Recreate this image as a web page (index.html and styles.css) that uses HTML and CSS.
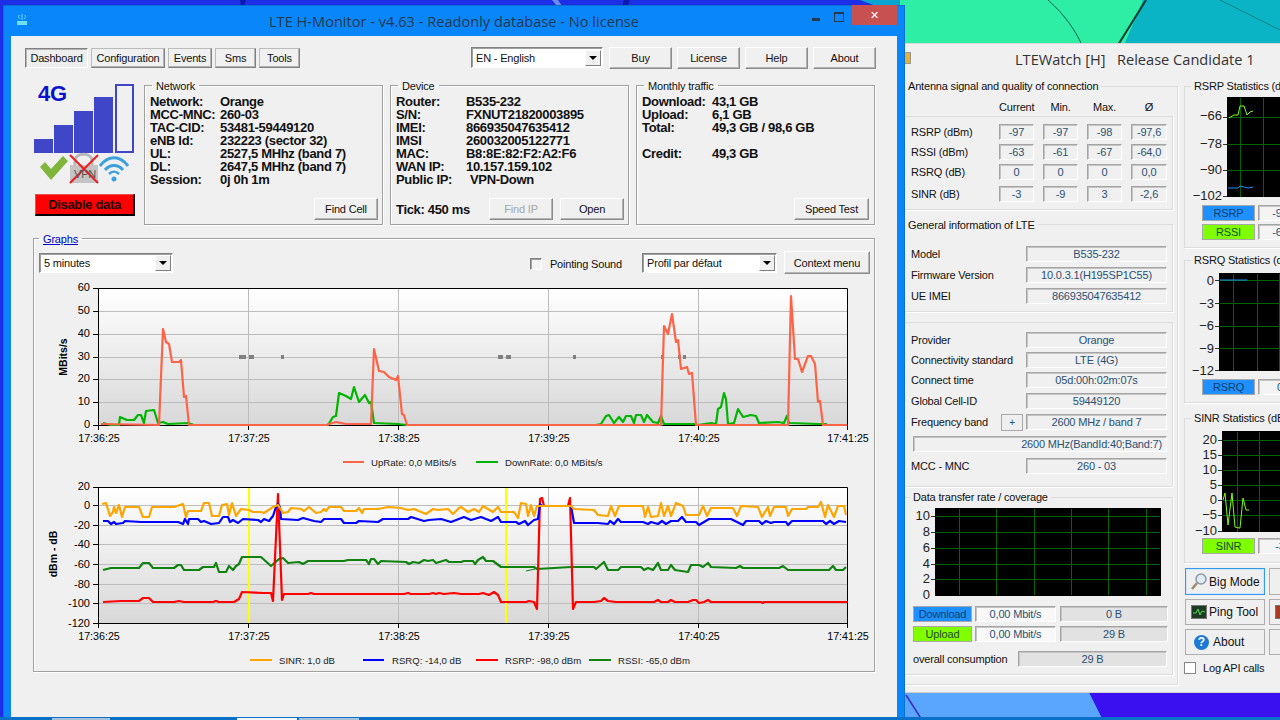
FILE: index.html
```html
<!DOCTYPE html>
<html lang="en">
  <head>
    <meta charset="UTF-8" />
    <title>LTE H-Monitor</title>
    <link rel="stylesheet" href="styles.css">
  </head>
  <body>
    <svg class="wallpaper" width="1280" height="720" viewBox="0 0 1280 720">
      <rect width="1280" height="720" fill="#1c2fe6" />
      <polygon points="240,0 246,0 244,6 241,6" fill="#0c1ab0" />
      <polygon points="552,0 558,0 562,6 557,6" fill="#6c8cf4" />
      <polygon points="624,0 630,0 628,6 622,6" fill="#0c1ab0" />
      <polygon points="860,0 905,0 905,6 876,6" fill="#0aa4d0" />
      <polygon points="900,0 1143,0 1130,50 900,50" fill="#2eeea6" />
      <polygon points="1143,0 1280,0 1280,50 1122,50" fill="#0ab4c4" />
      <path d="M1048,0 C1065,15 1075,30 1082,45" stroke="#0c5c50" stroke-width="1" fill="none" />
      <path d="M1146,0 L1118,45" stroke="#0a3a34" stroke-width="2" fill="none" />
      <path d="M1220,0 L1280,30" stroke="#0a8090" stroke-width="1" fill="none" />
      <polygon points="900,690 1088,690 1103,720 900,720" fill="#5aa6ff" />
      <polygon points="1088,690 1280,690 1280,720 1103,720" fill="#3a10f0" />
      <path d="M906,695 L922,720" stroke="#3a2ac0" stroke-width="1.5" fill="none" />
      <rect x="0" y="717" width="1280" height="3" fill="#0a70c8" />
      <rect x="52" y="718" width="58" height="2" fill="#a8c4dc" />
      <rect x="237" y="718" width="60" height="2" fill="#f4f8fc" />
      <rect x="299" y="718" width="60" height="2" fill="#a8c4dc" />
    </svg>

    <section class="watch">
      <header class="watch-title">LTEWatch [H] &nbsp; Release Candidate 1</header>
      <span class="watch-icon"></span>
      <div class="watch-body">
        <fieldset class="soft watch-left">
          <legend>Antenna signal and quality of connection</legend>
          <div class="sig-head">
            <span>Current</span><span>Min.</span><span>Max.</span><span>Ø</span>
          </div>
          <div class="soft-box sig-table">
            <span class="sig-label">RSRP (dBm)</span><span class="field">-97</span><span class="field">-97</span><span class="field">-98</span><span class="field">-97,6</span>
            <span class="sig-label">RSSI (dBm)</span><span class="field">-63</span><span class="field">-61</span><span class="field">-67</span><span class="field">-64,0</span>
            <span class="sig-label">RSRQ (dB)</span><span class="field">0</span><span class="field">0</span><span class="field">0</span><span class="field">0,0</span>
            <span class="sig-label">SINR (dB)</span><span class="field">-3</span><span class="field">-9</span><span class="field">3</span><span class="field">-2,6</span>
          </div>

          <fieldset class="soft info-group">
            <legend>General information of LTE</legend>
            <div class="info-rows info-rows-wide">
              <div class="info-row"><span class="info-label">Model</span><span class="field">B535-232</span></div>
              <div class="info-row"><span class="info-label">Firmware Version</span><span class="field">10.0.3.1(H195SP1C55)</span></div>
              <div class="info-row"><span class="info-label">UE IMEI</span><span class="field">866935047635412</span></div>
            </div>
          </fieldset>

          <div class="soft-box provider-box">
            <div class="info-rows">
              <div class="info-row"><span class="info-label">Provider</span><span class="field">Orange</span></div>
              <div class="info-row"><span class="info-label">Connectivity standard</span><span class="field">LTE (4G)</span></div>
              <div class="info-row"><span class="info-label">Connect time</span><span class="field">05d:00h:02m:07s</span></div>
              <div class="info-row loose"><span class="info-label">Global Cell-ID</span><span class="field">59449120</span></div>
              <div class="info-row loose">
                <span class="info-label info-label-short">Frequency band</span>
                <button class="plus-btn">+</button>
                <span class="field">2600 MHz / band 7</span>
              </div>
              <div class="info-row looser"><span class="field field-wide">2600 MHz(BandId:40;Band:7)</span></div>
              <div class="info-row looser"><span class="info-label">MCC - MNC</span><span class="field">260 - 03</span></div>
            </div>
          </div>

          <fieldset class="soft transfer-group">
            <legend>Data transfer rate / coverage</legend>
            <svg class="mini-chart transfer-chart" width="268" height="96" viewBox="905 504 268 96">
              <rect x="935" y="508" width="226" height="88" fill="#000" />
              <path class="mini-grid" d="M959.5,509V595M996.5,509V595M1034.5,509V595M1071.5,509V595M1108.5,509V595M1146.5,509V595M936,516.5H1160M936,532.5H1160M936,548.5H1160M936,564.5H1160M936,579.5H1160" />
              <path class="mini-tick" d="M931,516.5h4M931,532.5h4M931,548.5h4M931,564.5h4M931,579.5h4" />
              <text x="930" y="520">10</text>
              <text x="930" y="536">8</text>
              <text x="930" y="552">6</text>
              <text x="930" y="568">4</text>
              <text x="930" y="583">2</text>
              <text x="930" y="599">0</text>
            </svg>
            <div class="rate-rows">
              <span class="swatch swatch-blue">Download</span><span class="field field-light">0,00 Mbit/s</span><span class="field field-grey">0 B</span>
              <span class="swatch swatch-green">Upload</span><span class="field field-light">0,00 Mbit/s</span><span class="field field-grey">29 B</span>
            </div>
            <div class="overall">
              <span>overall consumption</span>
              <span class="field field-grey">29 B</span>
            </div>
          </fieldset>
        </fieldset>

        <div class="watch-right">
          <fieldset class="soft stat-group">
            <legend>RSRP Statistics (dBm)</legend>
            <svg class="mini-chart stat-rsrp" width="130" height="104" viewBox="1184 94 130 104">
              <rect x="1226" y="97" width="90" height="100" fill="#000" />
              <path class="mini-grid" d="M1239.5,98V197M1262.5,98V197M1227,117.5H1316M1227,144.5H1316M1227,170.5H1316" />
              <path class="mini-tick" d="M1222,117.5h4M1222,144.5h4M1222,170.5h4M1222,196.5h4" />
              <text x="1221" y="120">−66</text>
              <text x="1221" y="148">−78</text>
              <text x="1221" y="174">−90</text>
              <text x="1221" y="200">−102</text>
              <polyline class="trace-green" points="1228,118 1233,115 1237,115 1239,106 1243,106 1246,115 1249,112 1252,111" />
              <polyline class="trace-blue" points="1227,188 1237,188 1239,186 1243,187 1247,188 1252,187" />
            </svg>
            <div class="stat-row"><span class="swatch swatch-blue swatch-stat">RSRP</span><span class="field">-97</span></div>
            <div class="stat-row"><span class="swatch swatch-green swatch-stat">RSSI</span><span class="field">-63</span></div>
          </fieldset>

          <fieldset class="soft stat-group stat-rsrq-group">
            <legend>RSRQ Statistics (dB)</legend>
            <svg class="mini-chart stat-rsrq" width="130" height="101" viewBox="1184 272 130 101">
              <rect x="1218" y="273" width="90" height="98" fill="#000" />
              <path class="mini-grid" d="M1232.5,274V371M1256.5,274V371M1278.5,274V371M1219,280.5H1308M1219,303.5H1308M1219,326.5H1308M1219,348.5H1308" />
              <path class="mini-tick" d="M1214,280.5h4M1214,303.5h4M1214,326.5h4M1214,348.5h4M1214,370.5h4" />
              <text x="1213" y="285">0</text>
              <text x="1213" y="308">−3</text>
              <text x="1213" y="330">−6</text>
              <text x="1213" y="353">−9</text>
              <text x="1213" y="375">−12</text>
              <polyline class="trace-blue" points="1219,280 1246,280" />
            </svg>
            <div class="stat-row"><span class="swatch swatch-blue swatch-stat">RSRQ</span><span class="field">0</span></div>
          </fieldset>

          <fieldset class="soft stat-group stat-sinr-group">
            <legend>SINR Statistics (dB)</legend>
            <svg class="mini-chart stat-sinr" width="130" height="106" viewBox="1184 430 130 106">
              <rect x="1221" y="431" width="90" height="101" fill="#000" />
              <path class="mini-grid" d="M1236.5,432V532M1258.5,432V532M1222,440.5H1311M1222,455.5H1311M1222,470.5H1311M1222,485.5H1311M1222,500.5H1311M1222,515.5H1311" />
              <path class="mini-tick" d="M1217,440.5h4M1217,455.5h4M1217,470.5h4M1217,485.5h4M1217,500.5h4M1217,515.5h4M1217,531.5h4" />
              <text x="1216" y="444">20</text>
              <text x="1216" y="459">15</text>
              <text x="1216" y="474">10</text>
              <text x="1216" y="489">5</text>
              <text x="1216" y="504">0</text>
              <text x="1216" y="519">−5</text>
              <text x="1216" y="535">−10</text>
              <polyline class="trace-green" points="1222,500 1224,493 1227,525 1231,493 1234,527 1238,528 1239,528 1242,498 1245,510 1248,510" />
            </svg>
            <div class="stat-row"><span class="swatch swatch-green swatch-stat">SINR</span><span class="field">-3</span></div>
          </fieldset>

          <div class="side-buttons">
            <button class="side-btn side-btn-focus">
              <svg width="16" height="18" viewBox="0 0 16 18"><circle cx="10" cy="6" r="5" fill="#dfeaf2" stroke="#8a9aa6" stroke-width="1.5" /><path d="M6,10 L1,16" stroke="#9a8a70" stroke-width="2.5" /></svg>
              Big Mode
            </button>
            <button class="side-btn"></button>
            <button class="side-btn">
              <svg width="16" height="14" viewBox="0 0 16 14"><rect x="0.5" y="0.5" width="15" height="13" fill="#1c3a24" stroke="#777" /><path d="M2,8 L5,8 L7,4 L9,10 L11,6 L14,7" stroke="#4ce04c" fill="none" /></svg>
              Ping Tool
            </button>
            <button class="side-btn">
              <svg width="14" height="14" viewBox="0 0 14 14"><rect x="0.5" y="0.5" width="13" height="13" fill="#a83a24" stroke="#777" /></svg>
            </button>
            <button class="side-btn side-btn-about">
              <svg width="15" height="15" viewBox="0 0 15 15"><circle cx="7.5" cy="7.5" r="7.5" fill="#1c7ad4" /></svg>
              <span class="about-q">?</span>
              About
            </button>
            <button class="side-btn"></button>
          </div>
          <label class="log-api"><span class="check check-soft"></span>Log API calls</label>
        </div>
      </div>
    </section>

    <section class="monitor">
      <header class="monitor-title">
        <svg class="app-icon" width="10" height="12" viewBox="0 0 10 12"><path d="M5,1V7M2,2C1,4 2,5 3,6M8,2C9,4 8,5 7,6" stroke="#6fe0f0" fill="none" /><rect x="0" y="8" width="10" height="4" fill="#6fe0f0" /></svg>
        <span class="monitor-name">LTE H-Monitor - v4.63 - Readonly database - No license</span>
        <div class="caption">
          <span class="cap-min"></span>
          <span class="cap-max"></span>
          <span class="cap-close">✕</span>
        </div>
      </header>

      <div class="client">
        <nav class="toolbar">
          <div class="tabs">
            <button class="tab tab-active">Dashboard</button>
            <button class="tab tab-config">Configuration</button>
            <button class="tab tab-events">Events</button>
            <button class="tab tab-sms">Sms</button>
            <button class="tab tab-tools">Tools</button>
          </div>
          <div class="combo combo-lang"><span>EN - English</span><i class="combo-arrow"></i></div>
          <button class="btn">Buy</button>
          <button class="btn">License</button>
          <button class="btn">Help</button>
          <button class="btn">About</button>
        </nav>

        <div class="dash">
          <div class="status">
            <div class="status-icons">
              <span class="badge-4g">4G</span>
              <svg class="signal" width="100" height="100" viewBox="34 86 100 100">
                <rect x="34" y="141" width="19" height="14" fill="#3f47c8" />
                <rect x="54" y="127" width="19" height="28" fill="#3f47c8" />
                <rect x="74" y="113" width="19" height="42" fill="#3f47c8" />
                <rect x="94" y="99" width="19" height="56" fill="#3f47c8" />
                <rect x="116" y="87" width="17" height="67" fill="none" stroke="#3f47c8" stroke-width="2" />
                <polygon points="40,169 45,164 51,171 63,158 68,163 51,182" fill="#7fb53a" />
                <path d="M75,169 V163 C75,154 92,154 92,163 V169" fill="none" stroke="#b8b8b8" stroke-width="3" />
                <rect x="70" y="167" width="28" height="18" fill="#c4c4c4" />
                <path d="M70,157 L98,185 M98,157 L70,185" stroke="#ee1c1c" stroke-width="2" />
                <path d="M100,168 C108,157 120,157 128,168" fill="none" stroke="#3ba0dc" stroke-width="3" />
                <path d="M105,172 C110,166 118,166 123,172" fill="none" stroke="#3ba0dc" stroke-width="3" />
                <path d="M109,176 C112,173 116,173 119,176" fill="none" stroke="#3ba0dc" stroke-width="2.5" />
                <circle cx="114" cy="181" r="2.5" fill="#3ba0dc" />
              </svg>
              <span class="vpn-tag">VPN</span>
            </div>
            <button class="disable-btn">Disable data</button>
          </div>

          <fieldset class="group">
            <legend>Network</legend>
            <dl class="kv">
              <dt>Network:</dt><dd>Orange</dd>
              <dt>MCC-MNC:</dt><dd>260-03</dd>
              <dt>TAC-CID:</dt><dd>53481-59449120</dd>
              <dt>eNB Id:</dt><dd>232223 (sector 32)</dd>
              <dt>UL:</dt><dd>2527,5 MHhz (band 7)</dd>
              <dt>DL:</dt><dd>2647,5 MHhz (band 7)</dd>
              <dt>Session:</dt><dd>0j 0h 1m</dd>
            </dl>
            <div class="group-foot"><button class="btn">Find Cell</button></div>
          </fieldset>

          <fieldset class="group">
            <legend>Device</legend>
            <dl class="kv">
              <dt>Router:</dt><dd>B535-232</dd>
              <dt>S/N:</dt><dd>FXNUT21820003895</dd>
              <dt>IMEI:</dt><dd>866935047635412</dd>
              <dt>IMSI</dt><dd>260032005122771</dd>
              <dt>MAC:</dt><dd>B8:8E:82:F2:A2:F6</dd>
              <dt>WAN IP:</dt><dd>10.157.159.102</dd>
              <dt>Public IP:</dt><dd class="kv-indent">VPN-Down</dd>
            </dl>
            <div class="group-foot">
              <span class="tick">Tick: 450 ms</span>
              <button class="btn" disabled>Find IP</button>
              <button class="btn">Open</button>
            </div>
          </fieldset>

          <fieldset class="group">
            <legend>Monthly traffic</legend>
            <dl class="kv">
              <dt>Download:</dt><dd>43,1 GB</dd>
              <dt>Upload:</dt><dd>6,1 GB</dd>
              <dt>Total:</dt><dd>49,3 GB / 98,6 GB</dd>
              <dt class="kv-gap">Credit:</dt><dd class="kv-gap">49,3 GB</dd>
            </dl>
            <div class="group-foot"><button class="btn btn-speed">Speed Test</button></div>
          </fieldset>
        </div>

        <fieldset class="group graphs">
          <legend><a href="#graphs">Graphs</a></legend>
          <div class="graph-tools">
            <div class="combo combo-range"><span>5 minutes</span><i class="combo-arrow"></i></div>
            <label class="pointing"><span class="check"></span>Pointing Sound</label>
            <div class="combo combo-profile"><span>Profil par défaut</span><i class="combo-arrow"></i></div>
            <button class="btn btn-context">Context menu</button>
          </div>

          <svg class="chart chart-rates" width="842" height="195" viewBox="33 280 842 195">
            <rect x="98" y="289" width="749" height="137" fill="url(#plotfade)" />
            <defs>
              <linearGradient id="plotfade" x1="0" y1="0" x2="0" y2="1">
                <stop offset="0" stop-color="#fff" />
                <stop offset="1" stop-color="#d8d8d8" />
              </linearGradient>
            </defs>
            <path class="grid" d="M247.5,289V426M397.5,289V426M547.5,289V426M697.5,289V426M98,312.5H847M98,335.5H847M98,358.5H847M98,380.5H847M98,403.5H847" />
            <path class="frame" d="M97.5,426V289.5H846.5V426M92,289.5h6M92,312.5h6M92,335.5h6M92,358.5h6M92,380.5h6M92,403.5h6M92,426.5h755M97.5,426v5M247.5,426v5M397.5,426v5M547.5,426v5M697.5,426v5M846.5,426v5" />
            <path class="dots" d="M238,358h7M248,358h5M280,358h3M497,358h5M505,358h5M572,358h3M660,358h2M677,358h3M682,358h3" />
            <polyline class="line line-down" points="102,424 110,426 118,426 119,418 126,421 133,421 137,416 140,416 143,424 145,412 153,411 157,424 162,423 167,425 187,424 193,426 327,426 332,418 335,417 338,394 345,397 350,400 353,388 358,403 364,396 368,404 370,403 373,424 397,425 405,426 595,426 600,425 605,417 608,416 613,424 618,418 622,423 625,417 630,417 633,424 635,416 640,416 643,423 646,416 652,423 657,424 660,417 663,425 693,425 697,426 710,424 715,425 717,410 720,408 723,394 725,400 727,425 733,424 737,410 742,418 750,416 755,417 758,424 777,423 783,424 786,417 788,424 817,425 825,425 826,426" />
            <polyline class="line line-up" points="100,425 158,426 162,330 165,343 168,345 171,363 178,363 180,361 183,398 185,397 188,426 325,426 335,423 345,425 370,425 373,350 378,372 383,373 388,378 395,381 397,377 401,415 403,416 406,426 660,426 663,327 667,335 671,315 675,343 677,341 680,370 686,368 688,375 691,374 695,426 787,426 790,297 794,360 797,360 801,373 807,357 810,357 814,365 817,403 819,402 822,426 846,426" />
            <g class="ticks-y">
              <text x="89" y="292">60</text>
              <text x="89" y="315">50</text>
              <text x="89" y="338">40</text>
              <text x="89" y="361">30</text>
              <text x="89" y="383">20</text>
              <text x="89" y="406">10</text>
              <text x="89" y="429">0</text>
            </g>
            <g class="ticks-x">
              <text x="98" y="443">17:36:25</text>
              <text x="248" y="443">17:37:25</text>
              <text x="398" y="443">17:38:25</text>
              <text x="548" y="443">17:39:25</text>
              <text x="698" y="443">17:40:25</text>
              <text x="847" y="443">17:41:25</text>
            </g>
            <text class="axis-title" transform="translate(66,358) rotate(-90)">MBits/s</text>
            <path class="key key-up" d="M342,463h21" />
            <text class="key-text" x="370" y="467">UpRate: 0,0 MBits/s</text>
            <path class="key key-down" d="M475,463h22" />
            <text class="key-text" x="504" y="467">DownRate: 0,0 MBits/s</text>
          </svg>

          <svg class="chart chart-signal" width="842" height="195" viewBox="33 475 842 195">
            <rect x="98" y="488" width="749" height="136" fill="url(#plotfade)" />
            <path class="grid" d="M397.5,488V624M547.5,488V624M697.5,488V624M98,506.5H847M98,526.5H847M98,545.5H847M98,565.5H847M98,585.5H847M98,604.5H847" />
            <path class="marker" d="M248,488V624M505,488V624" />
            <path class="frame" d="M97.5,624V488.5H846.5V624M92,488.5h6M92,506.5h6M92,526.5h6M92,545.5h6M92,565.5h6M92,585.5h6M92,604.5h6M92,624.5h755M97.5,624v5M247.5,624v5M397.5,624v5M547.5,624v5M697.5,624v5M846.5,624v5" />
            <polyline class="line line-rssi" points="102,571 110,569 138,569 142,564 148,564 152,569 173,569 177,566 180,566 183,571 198,571 202,568 213,568 215,564 218,573 225,573 228,567 232,571 235,567 238,565 241,558 260,558 270,567 278,560 282,559 287,564 298,563 302,565 307,562 343,562 347,561 365,561 368,565 370,560 373,560 377,565 380,562 405,563 408,565 412,563 418,564 423,561 427,562 432,561 435,564 445,561 448,563 460,563 463,562 472,562 474,565 477,561 482,558 485,562 492,562 500,568 533,568 536,570 570,568 593,568 595,570 603,563 607,571 617,571 620,568 640,568 643,571 647,569 652,571 657,564 660,571 667,571 670,566 674,571 687,573 690,566 698,566 702,568 707,564 710,568 735,569 739,567 742,569 778,569 782,567 787,571 828,571 832,567 835,571 842,571 845,568" />
            <polyline class="line-thin" points="525,572 534,570" />
            <polyline class="line line-rsrp" points="102,603 120,602 138,602 142,599 148,599 152,603 173,603 178,602 183,603 212,603 215,602 218,603 233,603 238,600 241,593 263,594 270,594 272,602 277,495 281,601 283,595 307,595 310,594 313,595 403,595 407,594 410,595 428,595 432,594 435,595 438,594 443,595 453,594 460,595 478,595 482,594 488,596 493,593 497,596 500,603 525,603 528,602 533,603 536,610 539,500 541,499 543,507 567,507 569,499 572,610 575,603 593,603 600,602 603,599 607,602 615,603 653,603 657,601 660,603 667,603 670,601 674,603 687,603 692,601 695,601 698,604 703,603 707,601 710,603 760,603 762,604 763,603 846,603" />
            <polyline class="line line-rsrq" points="102,522 107,522 110,525 113,523 115,525 122,524 124,522 140,523 177,523 182,525 184,520 187,525 188,520 197,520 200,523 203,522 210,525 218,524 222,518 227,518 229,523 232,521 237,524 242,520 257,521 260,523 263,520 268,522 272,517 275,508 277,505 279,508 280,520 297,521 302,519 313,522 320,523 323,520 340,520 343,524 355,524 358,522 377,523 382,520 407,520 410,518 423,522 428,521 440,520 450,523 463,518 470,521 480,518 490,522 497,518 500,523 515,523 518,525 524,522 527,526 533,521 537,520 539,505 541,507 570,507 573,524 597,524 607,525 609,522 613,525 617,520 620,523 642,523 647,525 650,523 657,525 661,522 665,525 670,522 677,522 681,518 685,523 695,523 698,526 703,523 708,520 730,520 742,526 745,522 758,522 761,525 765,522 770,524 773,523 785,523 787,526 791,522 822,522 825,525 829,522 833,525 838,522 845,523" />
            <polyline class="line line-sinr" points="101,505 105,504 109,517 112,513 113,508 115,514 118,506 121,518 124,508 138,508 142,518 148,518 151,508 173,508 182,505 185,518 187,512 200,512 203,504 208,504 211,517 218,517 221,506 226,505 228,516 231,504 235,517 240,510 248,511 252,513 260,513 263,514 272,508 277,506 282,514 287,513 290,509 300,510 303,512 308,508 315,514 320,513 323,510 325,512 328,508 340,508 343,512 355,512 358,509 361,514 363,510 377,510 387,508 400,509 407,511 413,510 425,515 432,510 437,511 447,510 452,515 458,509 460,508 467,513 473,510 478,513 482,507 487,510 492,513 497,508 500,513 513,513 517,519 520,504 525,505 527,517 530,506 533,517 536,507 570,507 573,510 593,511 597,516 607,517 610,507 614,517 618,507 642,507 644,518 647,508 650,518 657,517 660,504 663,517 667,507 670,517 675,504 682,507 685,516 698,516 702,507 706,517 710,509 732,509 736,517 740,507 757,508 761,518 767,508 769,517 773,508 785,508 787,517 791,510 805,510 807,508 817,508 820,503 824,518 827,506 833,518 837,507 843,507 845,516" />
            <g class="ticks-y">
              <text x="89" y="491">20</text>
              <text x="89" y="510">0</text>
              <text x="89" y="530">-20</text>
              <text x="89" y="549">-40</text>
              <text x="89" y="569">-60</text>
              <text x="89" y="589">-80</text>
              <text x="89" y="608">-100</text>
              <text x="89" y="628">-120</text>
            </g>
            <g class="ticks-x">
              <text x="98" y="641">17:36:25</text>
              <text x="248" y="641">17:37:25</text>
              <text x="398" y="641">17:38:25</text>
              <text x="548" y="641">17:39:25</text>
              <text x="698" y="641">17:40:25</text>
              <text x="847" y="641">17:41:25</text>
            </g>
            <text class="axis-title" transform="translate(56,555) rotate(-90)">dBm - dB</text>
            <path class="key key-sinr" d="M249,661h22" />
            <text class="key-text" x="278" y="665">SINR: 1,0 dB</text>
            <path class="key key-rsrq" d="M362,661h21" />
            <text class="key-text" x="391" y="665">RSRQ: -14,0 dB</text>
            <path class="key key-rsrp" d="M475,661h22" />
            <text class="key-text" x="504" y="665">RSRP: -98,0 dBm</text>
            <path class="key key-rssi" d="M588,661h22" />
            <text class="key-text" x="617" y="665">RSSI: -65,0 dBm</text>
          </svg>
        </fieldset>
      </div>
    </section>
  </body>
</html>
```

FILE: styles.css
```css
* {
  box-sizing: border-box;
}

body {
  margin: 0;
  width: 1280px;
  height: 720px;
  overflow: hidden;
  position: relative;
  font-family: "Liberation Sans", Arial, sans-serif;
  font-size: 11px;
  letter-spacing: -0.18px;
  color: #111;
  background: #1c2fe6;
}

button {
  font: inherit;
  letter-spacing: inherit;
  color: inherit;
  padding: 0;
}

fieldset {
  margin: 0;
  padding: 0;
  min-width: 0;
}

.wallpaper {
  position: absolute;
  left: 0;
  top: 0;
}

/* main window */
.monitor {
  position: absolute;
  left: 3px;
  top: 5px;
  width: 902px;
  height: 712px;
  background: #0a86fb;
  padding: 0 8px;
  box-shadow: inset 1px 0 0 #0a70d0, inset -1px 0 0 #0a70d0, inset 0 1px 0 #0a70d0;
}

.monitor-title {
  height: 31px;
  display: flex;
  align-items: center;
  justify-content: center;
  position: relative;
}

.monitor-name {
  font-family: "Open Sans", sans-serif;
  font-size: 14.6px;
  letter-spacing: 0;
  color: #24384c;
}

.app-icon {
  position: absolute;
  left: 6px;
  top: 8px;
}

.caption {
  position: absolute;
  right: 0;
  top: 0;
  display: flex;
  align-items: flex-start;
}

.cap-min {
  width: 8px;
  height: 3px;
  margin: 13px 14px 0 0;
  background: #26384a;
}

.cap-max {
  width: 10px;
  height: 10px;
  margin: 7px 8px 0 0;
  border: 1px solid #26384a;
  border-top-width: 2px;
}

.cap-close {
  width: 45px;
  height: 20px;
  background: #c75050;
  color: #fff;
  font-size: 11px;
  line-height: 20px;
  text-align: center;
}

.client {
  height: 681px;
  background: #f0f0f0;
  padding: 11px 20px 0 14px;
}

.toolbar {
  display: flex;
  align-items: flex-start;
  gap: 5px;
  height: 22px;
}

.tabs {
  display: flex;
  gap: 3px;
  margin: 1px 166px 0 0;
}

.tab,
.btn {
  height: 22px;
  width: 63px;
  background: #f0f0f0;
  border: 1px solid;
  border-color: #fff #8c8c8c #8c8c8c #fff;
  box-shadow: inset -1px -1px 0 #b4b4b4;
  white-space: nowrap;
}

.tab {
  height: 20px;
  border-color: #bbb #808080 #808080 #bbb;
  line-height: 16px;
}

.tab-active {
  border-color: #808080 #fff #fff #808080;
  box-shadow: inset 1px 1px 0 #b4b4b4;
  background-image: linear-gradient(45deg, #e8e8e8 25%, transparent 25%, transparent 75%, #e8e8e8 75%);
  background-size: 2px 2px;
}

.tab-config {
  width: 74px;
}

.tab-events {
  width: 44px;
}

.tab-sms {
  width: 41px;
}

.tab-tools {
  width: 41px;
}

.btn:disabled {
  color: #a6a6a6;
}

.combo {
  display: flex;
  align-items: center;
  justify-content: space-between;
  background: #fff;
  border: 1px solid;
  border-color: #808080 #fff #fff #808080;
  box-shadow: inset 1px 1px 0 #a0a0a0;
  padding: 1px 1px 1px 4px;
}

.combo-lang {
  width: 132px;
  height: 21px;
  margin-right: 1px;
}

.combo-arrow {
  width: 16px;
  height: 16px;
  background: #f0f0f0;
  border: 1px solid;
  border-color: #fff #808080 #808080 #fff;
  position: relative;
}

.combo-arrow::after {
  content: "";
  position: absolute;
  left: 3px;
  top: 5px;
  border: 4px solid transparent;
  border-top: 4px solid #000;
  border-bottom: 0;
}

/* dashboard row */
.dash {
  display: flex;
  gap: 7px;
  height: 148px;
  margin: 8px 0 0 8px;
}

.status {
  width: 104px;
  margin-right: 0;
  padding-top: 7px;
  display: flex;
  flex-direction: column;
  gap: 10px;
}

.status-icons {
  position: relative;
  height: 100px;
  margin-left: 1px;
}

.signal {
  display: block;
}

.badge-4g {
  position: absolute;
  left: 4px;
  top: -1px;
  font-size: 22px;
  line-height: 22px;
  font-weight: bold;
  color: #0a12cc;
}

.vpn-tag {
  position: absolute;
  left: 40px;
  top: 85px;
  font-size: 11px;
  line-height: 11px;
  color: #555;
}

.disable-btn {
  width: 100px;
  height: 22px;
  margin-left: 2px;
  background: #f00;
  border: 1px solid;
  border-color: #e85050 #000 #000 #e85050;
  border-width: 1px 2px 2px 1px;
  font-size: 13px;
  letter-spacing: -0.32px;
  font-weight: bold;
  color: #200000;
}

.group {
  width: 239px;
  border: 1px solid #a0a0a0;
  box-shadow: 1px 1px 0 #fff, inset 1px 1px 0 #fff;
  padding: 0 4px 4px 5px;
  display: flex;
  flex-direction: column;
}

.group legend {
  margin-left: 2px;
  padding: 2px 4px 0;
  line-height: 14px;
}

.kv {
  margin: 2px 0 0;
  display: grid;
  grid-template-columns: 70px 1fr;
  grid-auto-rows: 13px;
  font-size: 13px;
  letter-spacing: -0.32px;
  font-weight: bold;
  line-height: 13px;
  white-space: nowrap;
}

.kv dd {
  margin: 0;
}

.kv-indent {
  padding-left: 4px;
}

.kv-gap {
  margin-top: 13px !important;
}

.group-foot {
  margin-top: auto;
  display: flex;
  justify-content: flex-end;
  align-items: center;
  gap: 7px;
}

.group-foot .btn {
  height: 22px;
  width: 64px;
}

.tick {
  font-size: 13px;
  letter-spacing: -0.32px;
  font-weight: bold;
  margin-right: auto;
}

.group-foot .btn-speed {
  width: 75px;
  margin-right: 1px;
}

/* graphs */
.graphs {
  display: block;
  width: 842px;
  height: 442px;
  margin: 5px 0 0 8px;
  padding: 0;
}

.graphs legend {
  margin-left: 5px;
}

.graphs a {
  color: #0000cc;
  text-decoration: underline;
}

.graph-tools {
  display: flex;
  align-items: center;
  height: 23px;
  margin-top: 5px;
  padding: 0 4px 0 5px;
}

.combo-range {
  width: 134px;
  height: 20px;
  margin-right: auto;
}

.pointing {
  display: flex;
  align-items: center;
  gap: 8px;
  margin: 2px 20px 0 0;
}

.check {
  width: 12px;
  height: 12px;
  background: #f4f4f4;
  border: 1px solid;
  border-color: #808080 #fff #fff #808080;
  box-shadow: inset 1px 1px 0 #a0a0a0;
}

.combo-profile {
  width: 135px;
  height: 20px;
  margin-right: 7px;
}

.btn-context {
  width: 86px;
  height: 23px;
}

.chart {
  display: block;
  font-family: "Liberation Sans", Arial, sans-serif;
  letter-spacing: 0;
}

.chart-rates {
  margin-top: 5px;
}

.grid {
  fill: none;
  stroke: #bcbcbc;
  stroke-width: 1;
}

.frame {
  fill: none;
  stroke: #000;
  stroke-width: 1;
}

.dots {
  fill: none;
  stroke: #808080;
  stroke-width: 4;
}

.marker {
  fill: none;
  stroke: #ffff00;
  stroke-width: 2;
}

.line {
  fill: none;
  stroke-width: 2.2;
  stroke-linejoin: round;
}

.line-thin {
  fill: none;
  stroke: #0f820f;
  stroke-width: 1;
}

.line-up,
.key-up {
  stroke: #ff6347;
}

.line-down,
.key-down {
  stroke: #00b400;
}

.line-sinr,
.key-sinr {
  stroke: #ffa500;
}

.line-rsrq,
.key-rsrq {
  stroke: #0000ff;
}

.line-rsrp,
.key-rsrp {
  stroke: #ff0000;
}

.line-rssi,
.key-rssi {
  stroke: #0f820f;
}

.key {
  stroke-width: 2;
  fill: none;
}

.ticks-y text {
  font-size: 11px;
  text-anchor: end;
}

.ticks-x text {
  font-size: 10.7px;
  text-anchor: middle;
}

.axis-title {
  font-size: 10.5px;
  font-weight: bold;
  text-anchor: middle;
}

.key-text {
  font-size: 9.6px;
  fill: #222;
}

/* second window, mostly behind the main one */
.watch {
  position: absolute;
  left: 905px;
  top: 43px;
  width: 375px;
  height: 650px;
  overflow: hidden;
  background: #f0f0f0;
  border-top: 1px solid #d8d8d8;
  border-bottom: 1px solid #d0d0d0;
}

.watch-title {
  height: 35px;
  padding: 4px 0 0 110px;
  font-family: "Open Sans", sans-serif;
  font-size: 14.6px;
  letter-spacing: 0;
  line-height: 22px;
  color: #333;
  white-space: pre;
}

.watch-icon {
  position: absolute;
  left: 0;
  top: 8px;
  width: 6px;
  height: 12px;
  background: #e8b030;
  border: 1px solid #999;
  border-left: 0;
}

.watch-body {
  display: flex;
  gap: 6px;
  align-items: flex-start;
}

.soft {
  border: 1px solid #dcdcdc;
  box-shadow: 1px 1px 0 #fff;
}

.soft legend {
  line-height: 14px;
  padding: 0 3px;
  white-space: nowrap;
}

.soft-box {
  border: 1px solid #dcdcdc;
  box-shadow: 1px 1px 0 #fff;
}

.watch-left {
  width: 273px;
  height: 606px;
  flex: none;
  border-left: 0;
  padding: 0;
}

.watch-left > legend {
  margin-left: 0;
}

.sig-head {
  display: grid;
  grid-template-columns: 35px 35px 35px 36px;
  column-gap: 9px;
  height: 24px;
  padding: 7px 0 0 94px;
  text-align: center;
  line-height: 14px;
}

.sig-table {
  width: 268px;
  height: 94px;
  border-left: 0;
  display: grid;
  grid-template-columns: 79px 35px 35px 35px 36px;
  column-gap: 9px;
  grid-auto-rows: 16px;
  row-gap: 4px;
  padding: 7px 0 0 6px;
  margin-top: -1px;
}

.sig-table > * {
  align-self: start;
}

.sig-table > :nth-child(n+16) {
  margin-top: 2px;
}

.sig-label {
  line-height: 16px;
  white-space: nowrap;
}

.field {
  display: block;
  height: 16px;
  line-height: 14px;
  text-align: center;
  color: #2b5074;
  border: 1px solid;
  border-color: #a4a4a4 #fff #fff #a4a4a4;
  box-shadow: inset 1px 1px 0 #c4c4c4;
  white-space: nowrap;
}

.info-group {
  width: 268px;
  height: 96px;
  border-left: 0;
  margin-top: 6px;
}

.info-group legend {
  margin-left: 0;
  padding-top: 2px;
}

.info-rows {
  display: flex;
  flex-direction: column;
  gap: 4px;
  padding-left: 6px;
}

.info-rows-wide {
  gap: 5px;
  padding-top: 14px;
}

.info-row {
  display: flex;
  align-items: center;
  height: 16px;
}

.info-row .field {
  width: 141px;
}

.info-label {
  width: 115px;
  white-space: nowrap;
}

.info-label-short {
  width: 90px;
}

.plus-btn {
  width: 22px;
  height: 17px;
  margin-right: 3px;
  font-size: 10px;
  color: #2b5074;
  background: #efefef;
  border: 1px solid #a8a8a8;
}

.loose {
  margin-top: 1px;
}

.looser {
  margin-top: 2px;
}

.info-row .field-wide {
  width: 254px;
  margin-left: 2px;
  padding-right: 4px;
  text-align: right;
}

.provider-box {
  width: 268px;
  height: 165px;
  border-left: 0;
  margin-top: 10px;
  padding-top: 9px;
}

.transfer-group {
  width: 268px;
  height: 185px;
  border-left: 0;
  margin-top: 3px;
}

.transfer-group legend {
  margin-left: 5px;
}

.mini-chart {
  display: block;
  letter-spacing: 0;
  overflow: visible;
}

.mini-chart text {
  font-size: 13px;
  text-anchor: end;
  fill: #222;
}

.mini-grid {
  fill: none;
  stroke: #006400;
  stroke-width: 1;
}

.mini-tick {
  fill: none;
  stroke: #333;
  stroke-width: 1;
}

.trace-green,
.trace-blue {
  fill: none;
  stroke-width: 1;
}

.trace-green {
  stroke: #7fff00;
}

.trace-blue {
  stroke: #1e90ff;
}

.rate-rows {
  display: grid;
  grid-template-columns: 59px 80px 108px;
  column-gap: 4px;
  row-gap: 4px;
  grid-auto-rows: 16px;
  margin: 6px 0 0 8px;
}

.rate-rows .field-light {
  margin-left: -1px;
}

.swatch {
  display: block;
  height: 16px;
  line-height: 14px;
  text-align: center;
  color: #123f6b;
  border: 1px solid #a8a8a8;
}

.swatch-blue {
  background: #1e90ff;
}

.swatch-green {
  background: #7fff00;
  color: #1c4c30;
}

.field-light {
  background: #f8f8f8;
}

.field-grey {
  background: #e2e2e2;
}

.overall {
  display: flex;
  align-items: center;
  gap: 0;
  margin: 9px 0 0 8px;
}

.overall span:first-child {
  width: 105px;
}

.overall .field {
  width: 149px;
}

.watch-right {
  width: 180px;
  flex: none;
}

.stat-group {
  width: 170px;
  height: 169px;
}

.stat-group legend {
  margin-left: 6px;
}

.stat-group .mini-chart {
  margin-top: 1px;
}

.stat-rsrq-group {
  height: 150px;
  margin-top: 5px;
}

.stat-rsrq-group .mini-chart {
  margin-top: 5px;
}

.stat-sinr-group {
  height: 152px;
  margin-top: 8px;
}

.stat-sinr-group .mini-chart {
  margin-top: 5px;
}

.stat-row {
  display: flex;
  gap: 3px;
  height: 16px;
  margin: 7px 0 0 17px;
}

.stat-row + .stat-row {
  margin-top: 3px;
}

.stat-rsrq-group .stat-row {
  margin-top: 6px;
}

.stat-sinr-group .stat-row {
  margin-top: 2px;
}

.swatch-stat {
  width: 53px;
  flex: none;
}

.stat-row .field {
  width: 44px;
  flex: none;
  background: #f4f4f4;
}

.side-buttons {
  display: grid;
  grid-template-columns: 80px 80px;
  grid-template-rows: 27px 26px 26px;
  gap: 4px;
  margin: 5px 0 0 1px;
}

.side-btn {
  display: flex;
  align-items: center;
  gap: 2px;
  padding-left: 5px;
  background: #efefef;
  border: 1px solid #aeaeae;
  font-size: 12px;
  letter-spacing: 0;
  white-space: nowrap;
  position: relative;
}

.side-btn-focus {
  border-color: #3399ee;
  box-shadow: inset 0 0 0 1px #cfe6fa;
}

.side-btn-about {
  gap: 4px;
  padding-left: 8px;
}

.about-q {
  position: absolute;
  left: 8px;
  width: 15px;
  text-align: center;
  color: #fff;
  font-weight: bold;
}

.log-api {
  display: flex;
  align-items: center;
  gap: 7px;
  margin: 7px 0 0;
}

.check-soft {
  border: 1px solid #888;
  background: #fff;
  box-shadow: none;
}
```
